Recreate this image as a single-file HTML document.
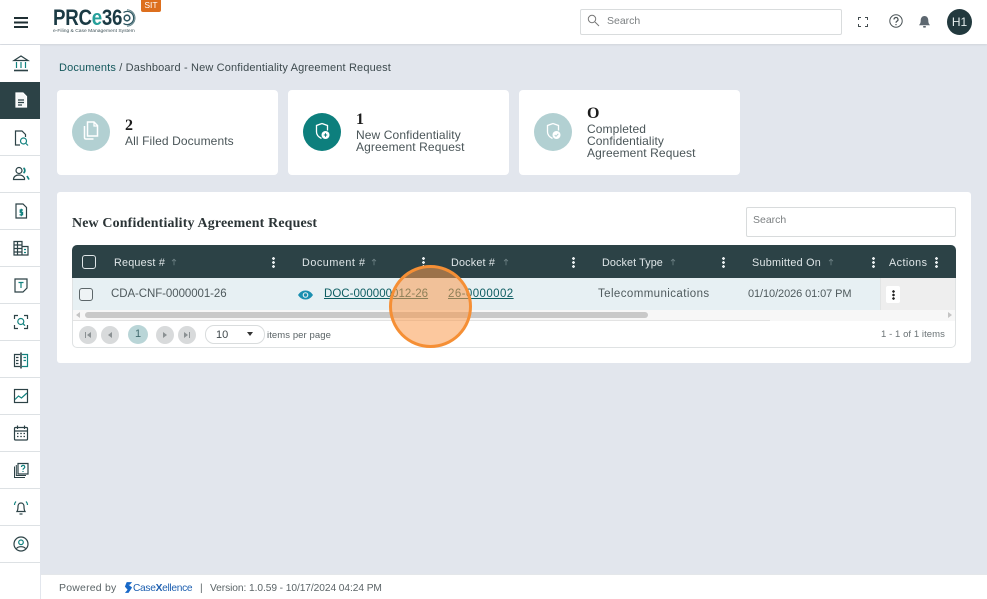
<!DOCTYPE html>
<html><head><meta charset="utf-8"><title>PRCe360</title>
<style>
*{box-sizing:border-box}
html,body{margin:0;padding:0}
body{width:987px;height:599px;overflow:hidden;position:relative;background:#e2e6ed;font-family:"Liberation Sans",sans-serif;color:#4a5558}
.a{position:absolute;white-space:nowrap}
.card{position:absolute;top:90px;height:85px;width:221px;background:#fff;border-radius:4px}
.circ{position:absolute;width:38px;height:38px;border-radius:50%;top:113px}
.lab{font-size:12px;line-height:12px;letter-spacing:.11px;color:#4a5558}
.num{font-family:"Liberation Serif",serif;font-weight:700;font-size:16px;color:#1c1c1c}
.th{font-size:10.8px;color:#dfe6e8;letter-spacing:.2px;top:257px;line-height:12px}
.td{font-size:11.5px;color:#4f5a5d;letter-spacing:-.08px;top:288px;line-height:13px}
.sep{position:absolute;left:0;width:40px;height:1px;background:#dde1e4}
.ic{position:absolute;left:10.5px;width:20px;height:20px;fill:none;stroke:#2c4246;stroke-width:1.2}
.ic .t{stroke:#12827f}
.dots{position:absolute;width:3px;top:257px;height:11px;background:radial-gradient(circle at 1.5px 1.5px,#e6ecee 1.3px,transparent 1.5px) 0 0/3px 4px repeat-y}
.arr{position:absolute;top:258px;width:6px;height:8px}
.pg{position:absolute;top:326px;width:18px;height:18px;border-radius:50%;background:#d8dadb}
.pg svg{position:absolute;left:5px;top:5px;width:8px;height:8px;fill:#8b9193}
a{color:#0d5d62;text-decoration:underline}
</style></head><body>

<!-- header -->
<div class="a" style="left:0;top:0;width:987px;height:44px;background:#fff;box-shadow:0 1px 2px rgba(0,0,0,.08)"></div>
<svg class="a" style="left:14px;top:17px" width="14" height="11"><path d="M0 1h14M0 5.500h14M0 10h14" stroke="#1f2f33" stroke-width="2"/></svg>
<div class="a" style="left:53px;top:4px;font-size:22px;line-height:28px;font-weight:700;letter-spacing:-.3px;color:#1b3a44;transform:scaleX(.85);transform-origin:0 0">PRC<span style="color:#27a09b">e</span>36</div>
<svg class="a" style="left:122px;top:9px" width="14" height="18" viewBox="0 0 14 18" fill="none" stroke="#2c5560"><circle cx="5" cy="9" r="2.800" stroke-width="1.600"/><path d="M1.500 3.500a6.500 6.500 0 0 1 8 .5 6.800 6.800 0 0 1 0 10 6.500 6.500 0 0 1-8 .5" stroke-width="1.300"/><path d="M5 .8a8.200 8.200 0 0 1 8 8.200 8.200 8.200 0 0 1-8 8.200" stroke-width="1" stroke="#5f8087"/></svg>
<div class="a" style="left:53px;top:27.500px;font-size:4.950px;line-height:7px;color:#3f5258">e-Filing &amp; Case Management System</div>
<div class="a" style="left:141px;top:0;width:20px;height:12px;background:#dd6f1e;border-radius:0 0 2px 2px;color:#fff;font-size:8.500px;line-height:10px;text-align:center">SIT</div>

<div class="a" style="left:580px;top:9px;width:262px;height:26px;border:1px solid #d9dcdd;border-radius:2px;background:#fff"></div>
<svg class="a" style="left:587px;top:14px" width="13" height="13" viewBox="0 0 13 13" fill="none" stroke="#777"><circle cx="5" cy="5" r="3.700"/><path d="M8 8l4 4"/></svg>
<div class="a" style="left:607px;top:15px;font-size:10.500px;line-height:13px;color:#7b7f81">Search</div>
<svg class="a" style="left:858px;top:17px" width="10" height="10" fill="none" stroke="#444d50"><path d="M.5 3V.5H3M7 .5h2.500V3M9.500 7v2.500H7M3 9.500H.5V7"/></svg>
<svg class="a" style="left:889px;top:14px" width="14" height="14" viewBox="0 0 14 14" fill="none" stroke="#4a5356"><circle cx="7" cy="7" r="6.200"/><path d="M5 5.500a2 2 0 1 1 3 1.700c-.7.400-1 .8-1 1.500" stroke-width="1.200"/><path d="M7 10v1.200" stroke-width="1.200"/></svg>
<svg class="a" style="left:918px;top:15px" width="13" height="14" viewBox="0 0 13 14" fill="#5d6770"><path d="M6.500 1c-2.500 0-3.800 2-3.800 4.500 0 2.500-.7 3.500-1.700 4.700h11c-1-1.200-1.700-2.200-1.700-4.700C10.300 3 9 1 6.500 1z"/><rect x="5" y="11" width="3" height="1.600" rx=".8"/></svg>
<div class="a" style="left:947px;top:9px;width:25px;height:26px;border-radius:50%;background:#22393e;color:#e6eeee;font-size:12px;line-height:26px;text-align:center">H1</div>

<!-- sidebar -->
<div class="a" style="left:0;top:45px;width:40px;height:554px;background:#fff"></div>
<div class="a" style="left:0;top:82px;width:40px;height:37px;background:#2c4246"></div>
<div class="sep" style="top:155px"></div><div class="sep" style="top:192px"></div><div class="sep" style="top:229px"></div><div class="sep" style="top:266px"></div><div class="sep" style="top:303px"></div><div class="sep" style="top:340px"></div><div class="sep" style="top:377px"></div><div class="sep" style="top:414px"></div><div class="sep" style="top:451px"></div><div class="sep" style="top:488px"></div><div class="sep" style="top:525px"></div><div class="sep" style="top:562px"></div>

<svg class="ic" style="top:53px" viewBox="0 0 20 20"><path d="M3 7.500L10 3l7 4.500z"/><path class="t" d="M5.500 9v6M10 9v6M14.500 9v6"/><path d="M3 17.500h14" stroke-width="1.600"/></svg>
<svg class="ic" style="top:90px;stroke:#fff" viewBox="0 0 20 20"><path d="M5 3h7l3.500 3.500V17H5z" fill="#f4f6f6"/><path d="M7 10h6M7 12.500h6M7 15h4" stroke="#2c4246"/></svg>
<svg class="ic" style="top:128px" viewBox="0 0 20 20"><path d="M9 17H4.500V3H11l3.500 3.500V9"/><circle class="t" cx="12.500" cy="13" r="3"/><path class="t" d="M15 15.500l2 2"/></svg>
<svg class="ic" style="top:164px" viewBox="0 0 20 20"><circle cx="8" cy="6.500" r="3"/><path d="M2.500 15.500c0-3 2.500-4.500 5.500-4.500s4.500 1 5.500 3v1.500z"/><path class="t" d="M12.500 4a3 3 0 0 1 0 5M16 12l2 3.500" stroke-width="1.700"/></svg>
<svg class="ic" style="top:201px" viewBox="0 0 20 20"><path d="M5 3h7l3.500 3.500V17H5z"/><path class="t" d="M12 9H9.200v2.300h2.400v2.500H8.500M10.300 7.800v7.400"/></svg>
<svg class="ic" style="top:238px" viewBox="0 0 20 20"><path d="M3 17V3.500h8V17zM11 8.500h6V17h-6M3 7h8M3 10.500h8M3 14h8M6.500 3.500V17"/><path class="t" d="M13 11.500h2M13 14.500h2"/></svg>
<svg class="ic" style="top:275px" viewBox="0 0 20 20"><path d="M4 4h12v9l-4 4H4z"/><path class="t" d="M7.500 7.500h5M10 7.500V13"/></svg>
<svg class="ic" style="top:312px" viewBox="0 0 20 20"><path d="M3.500 7V3.500H7M13 3.500h3.500V7M16.500 13v3.500H13M7 16.500H3.500V13"/><circle class="t" cx="9.800" cy="9.500" r="3"/><path class="t" d="M12 11.700l2 2"/></svg>
<svg class="ic" style="top:350px" viewBox="0 0 20 20"><path d="M9 4.500H3.500v12H9M5 7.500h2.500M5 10.500h2.500M5 13.500h2.500"/><path class="t" d="M11 4.500h5.500v12H11M12.500 7.500H15M12.500 10.500H15"/><path d="M10 2.500v16" stroke-width="1.600"/></svg>
<svg class="ic" style="top:386px" viewBox="0 0 20 20"><rect x="3.500" y="3.500" width="13" height="13"/><path class="t" d="M4 13.500l3.500-3.500 3 2 5.500-5"/></svg>
<svg class="ic" style="top:423px" viewBox="0 0 20 20"><rect x="3.500" y="4.500" width="13" height="12.500" rx="1"/><path d="M3.500 8h13M6.500 2.500V6M13.500 2.500V6"/><path d="M6 10.500h1.500M9.300 10.500h1.500M12.500 10.500H14M6 13.500h1.500M9.300 13.500h1.500M12.500 13.500H14" stroke-width="1.200"/></svg>
<svg class="ic" style="top:460px" viewBox="0 0 20 20"><path d="M7 3.500h10V14H7z"/><path d="M3.500 6.500v11h10.500M5.300 5v10.500h9.700" stroke-width="1"/><path class="t" d="M10.500 7a1.600 1.600 0 1 1 2.300 1.400c-.6.300-.8.700-.8 1.400M12 11v1"/></svg>
<svg class="ic" style="top:497px" viewBox="0 0 20 20"><path d="M6 14.500c1-1.500 1-3 1-5 0-2 1.200-3.500 3-3.500s3 1.500 3 3.500c0 2 0 3.500 1 5z"/><path d="M8.500 17h3"/><path class="t" d="M3.500 8c0-1.500.5-2.500 1.500-3.500M16.500 8c0-1.500-.5-2.500-1.500-3.500"/></svg>
<svg class="ic" style="top:534px" viewBox="0 0 20 20"><circle cx="10" cy="10" r="7"/><circle class="t" cx="10" cy="8.300" r="2.300"/><path d="M5.500 14.500c1-1.300 2.500-1.800 4.500-1.800s3.500.5 4.500 1.800"/></svg>

<!-- breadcrumb -->
<div class="a" style="left:59px;top:62px;font-size:11px;line-height:13px;letter-spacing:.15px;color:#3d4a4e"><span style="color:#14585c">Documents</span> / Dashboard - New Confidentiality Agreement Request</div>

<!-- cards -->
<div class="card" style="left:57px"></div>
<div class="card" style="left:288px"></div>
<div class="card" style="left:519px"></div>

<div class="circ" style="left:72px;background:#b2d0d2"></div>
<svg class="a" style="left:81px;top:120px" width="20" height="22" viewBox="0 0 20 22" fill="none" stroke="#fff" stroke-width="1.300"><path d="M6.500 2H13l3.500 3.500V16h-10z" stroke-width="1.500"/><path d="M13 2v4h3.500"/><path d="M3.500 6v11.500c0 1 .5 1.500 1.500 1.500h7.500" stroke-width="1.500"/></svg>
<div class="circ" style="left:303px;background:#0d7f7d"></div>
<svg class="a" style="left:313px;top:121px" width="20" height="22" viewBox="0 0 20 22" fill="none" stroke="#fff" stroke-width="1.300"><path d="M9 2.500l5.500 2v5M9 2.500l-5.500 2V11c0 3 2 5 5 6.500"/><circle cx="12.500" cy="14" r="4" fill="#fff" stroke="none"/><path d="M10.800 14h3.400M12.500 12.300v3.400" stroke="#0d7f7d" stroke-width="1"/></svg>
<div class="circ" style="left:534px;background:#b2d0d2"></div>
<svg class="a" style="left:544px;top:121px" width="20" height="22" viewBox="0 0 20 22" fill="none" stroke="#fff" stroke-width="1.300"><path d="M9 2.500l5.500 2v5M9 2.500l-5.500 2V11c0 3 2 5 5 6.500"/><circle cx="12.500" cy="14" r="4" fill="#fff" stroke="none"/><path d="M10.700 14l1.300 1.300 2.300-2.500" stroke="#b2d0d2" stroke-width="1"/></svg>

<div class="a num" style="left:125px;top:118px;line-height:16px">2</div>
<div class="a lab" style="left:125px;top:135px">All Filed Documents</div>
<div class="a num" style="left:356px;top:112px;line-height:16px">1</div>
<div class="a lab" style="left:356px;top:129px">New Confidentiality</div>
<div class="a lab" style="left:356px;top:141px">Agreement Request</div>
<div class="a num" style="left:587px;top:106px;line-height:16px">O</div>
<div class="a lab" style="left:587px;top:123px">Completed</div>
<div class="a lab" style="left:587px;top:135px">Confidentiality</div>
<div class="a lab" style="left:587px;top:147px">Agreement Request</div>

<!-- panel -->
<div class="a" style="left:57px;top:192px;width:914px;height:171px;background:#fff;border-radius:3px"></div>
<div class="a" style="left:72px;top:216px;font-family:'Liberation Serif',serif;font-weight:700;font-size:13.900px;line-height:16px;color:#2b3436;letter-spacing:.18px">New Confidentiality Agreement Request</div>
<div class="a" style="left:746px;top:207px;width:210px;height:30px;border:1px solid #d8dbdc;border-radius:2px;background:#fff;font-size:10.500px;line-height:25px;padding-left:6px;color:#7b7f81">Search</div>

<!-- table -->
<div class="a" style="left:72px;top:245px;width:884px;height:103px;border:1px solid #dfe2e3;border-radius:5px;background:#fff"></div>
<div class="a" style="left:72px;top:245px;width:884px;height:33px;background:#2c4246;border-radius:5px 5px 0 0"></div>
<div class="a" style="left:73px;top:278px;width:807px;height:32px;background:#e7f0f3"></div>
<div class="a" style="left:880px;top:278px;width:75px;height:32px;background:#eeeeee;border-left:1px solid #e2e4e4"></div>
<div class="a" style="left:73px;top:310px;width:882px;height:11px;background:#f7f7f7;border-bottom:1px solid #e3e3e3"></div>
<div class="a" style="left:770px;top:320px;width:185px;height:1px;background:#f7f7f7"></div>
<div class="a" style="left:85px;top:312px;width:563px;height:6px;background:#c9c9c9;border-radius:3px"></div>
<div class="a" style="left:76px;top:312px;width:0;height:0;border:3px solid transparent;border-right:4px solid #c4c4c4;border-left:0"></div>
<div class="a" style="left:948px;top:312px;width:0;height:0;border:3px solid transparent;border-left:4px solid #c4c4c4;border-right:0"></div>

<div class="a" style="left:82px;top:255px;width:14px;height:14px;border:1px solid #dfe6e8;border-radius:3px"></div>
<div class="a" style="left:79px;top:288px;width:14px;height:13px;border:1px solid #5c6669;border-radius:3px;background:#eef3f5"></div>

<div class="a th" style="left:114px">Request #</div>
<div class="a th" style="left:302px;letter-spacing:.53px">Document #</div>
<div class="a th" style="left:451px;letter-spacing:.19px">Docket #</div>
<div class="a th" style="left:602px;letter-spacing:.1px">Docket Type</div>
<div class="a th" style="left:752px;letter-spacing:.25px">Submitted On</div>
<div class="a th" style="left:889px;letter-spacing:.43px">Actions</div>

<svg class="arr" style="left:171px" viewBox="0 0 7 10" fill="none" stroke="#6f8286"><path d="M3.500 9V2M1 4l2.500-2.500L6 4"/></svg>
<svg class="arr" style="left:371px" viewBox="0 0 7 10" fill="none" stroke="#6f8286"><path d="M3.500 9V2M1 4l2.500-2.500L6 4"/></svg>
<svg class="arr" style="left:503px" viewBox="0 0 7 10" fill="none" stroke="#6f8286"><path d="M3.500 9V2M1 4l2.500-2.500L6 4"/></svg>
<svg class="arr" style="left:670px" viewBox="0 0 7 10" fill="none" stroke="#6f8286"><path d="M3.500 9V2M1 4l2.500-2.500L6 4"/></svg>
<svg class="arr" style="left:828px" viewBox="0 0 7 10" fill="none" stroke="#6f8286"><path d="M3.500 9V2M1 4l2.500-2.500L6 4"/></svg>

<div class="dots" style="left:272px"></div><div class="dots" style="left:422px"></div><div class="dots" style="left:572px"></div><div class="dots" style="left:722px"></div><div class="dots" style="left:872px"></div><div class="dots" style="left:935px"></div>

<div class="a td" style="left:111px">CDA-CNF-0000001-26</div>
<svg class="a" style="left:298px;top:290px" width="15" height="10" viewBox="0 0 15 10"><path d="M0 5c2-3 4.500-4.500 7.500-4.500S13 2 15 5c-2 3-4.500 4.500-7.500 4.500S2 8 0 5z" fill="#1a8fb0"/><circle cx="7.500" cy="5" r="2.800" fill="#e7f0f3"/><circle cx="7.500" cy="5" r="1.700" fill="#1a8fb0"/></svg>
<div class="a td" style="left:324px;letter-spacing:.03px"><a>DOC-000000012-26</a></div>
<div class="a td" style="left:448px;letter-spacing:.42px"><a>26-0000002</a></div>
<div class="a td" style="left:598px;letter-spacing:.41px">Telecommunications</div>
<div class="a td" style="left:748px;font-size:11px;letter-spacing:-.09px">01/10/2026 01:07 PM</div>
<div class="a" style="left:886px;top:286px;width:14px;height:17px;background:#fff;border-radius:2px"></div>
<div class="dots" style="left:891.500px;top:290px;height:10px;width:3px;background:radial-gradient(circle at 1.500px 1.500px,#222 1.200px,transparent 1.400px) 0 0/3px 3.500px repeat-y"></div>

<!-- pager -->
<div class="pg" style="left:79px"><svg viewBox="0 0 8 8"><path d="M1 1h1v6H1zM7 1v6L3 4z"/></svg></div>
<div class="pg" style="left:101px"><svg viewBox="0 0 8 8"><path d="M6 1v6L2 4z"/></svg></div>
<div class="a" style="left:128px;top:325px;width:20px;height:19px;border-radius:50%;background:#b9d5d7;color:#3f6a6e;font-size:11px;line-height:19px;text-align:center">1</div>
<div class="pg" style="left:156px"><svg viewBox="0 0 8 8"><path d="M2 1v6l4-3z"/></svg></div>
<div class="pg" style="left:178px"><svg viewBox="0 0 8 8"><path d="M1 1v6l4-3zM6 1h1v6H6z"/></svg></div>
<div class="a" style="left:205px;top:325px;width:60px;height:19px;border:1px solid #d9dcdd;border-radius:9px;background:#fff;font-size:11px;line-height:18px;padding-left:10px;color:#3f484b">10</div>
<div class="a" style="left:247px;top:332px;width:0;height:0;border:3.500px solid transparent;border-top:4.500px solid #333;border-bottom:0"></div>
<div class="a" style="left:267px;top:330px;font-size:9.500px;line-height:12px;letter-spacing:.08px;color:#5a6366">items per page</div>
<div class="a" style="left:881px;top:329px;font-size:9.500px;line-height:12px;letter-spacing:.07px;color:#6b7376">1 - 1 of 1 items</div>

<!-- footer -->
<div class="a" style="left:41px;top:574px;width:946px;height:25px;background:#fff;border-top:1px solid #e4e7ea"></div>
<div class="a" style="left:59px;top:582px;font-size:10.500px;line-height:13px;letter-spacing:.2px;color:#5b6467">Powered by</div>
<svg class="a" style="left:124px;top:582px" width="9" height="11" viewBox="0 0 10 12" fill="#1768c8"><path d="M3 0h6L6.500 3H5L9 6 5 12H1l3-3.500L1 5z"/></svg>
<div class="a" style="left:133px;top:582px;font-size:10.200px;line-height:13px;letter-spacing:-.3px;color:#1d5fb0">Case<b>X</b>ellence</div>
<div class="a" style="left:200px;top:582px;font-size:10.200px;line-height:13px;color:#5b6467">|</div>
<div class="a" style="left:210px;top:582px;font-size:10.200px;line-height:13px;letter-spacing:-.07px;color:#5b6467">Version: 1.0.59 - 10/17/2024 04:24 PM</div>

<!-- overlay -->
<div class="a" style="left:389px;top:265px;width:83px;height:83px;border-radius:50%;border:3.500px solid #f58f35;background:rgba(249,154,79,.55)"></div>
</body></html>
